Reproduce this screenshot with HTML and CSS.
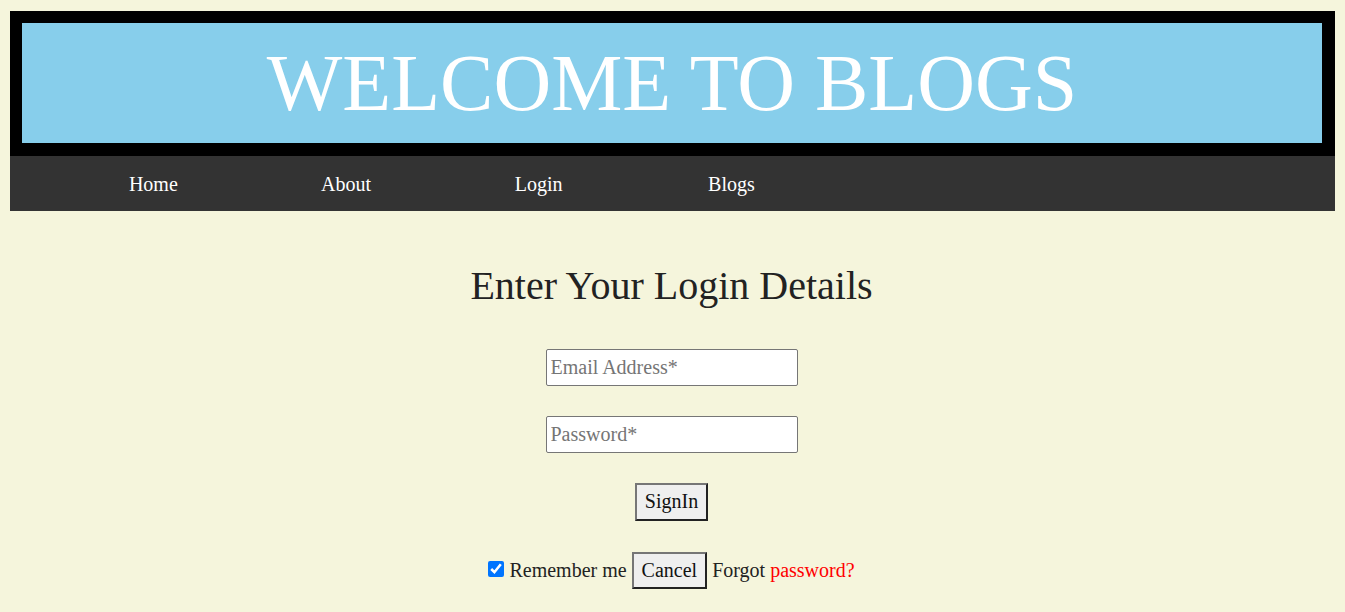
FILE: index.html
```html
<!DOCTYPE html>
<html lang="en">
<head>
<meta charset="utf-8">
<title>Blogs - Login</title>
<link rel="stylesheet" href="styles.css">
</head>
<body>
<header class="banner">
  <div class="banner-inner">
    <h1 class="banner-title">WELCOME TO BLOGS</h1>
  </div>
</header>
<nav class="nav">
  <a class="nav-link" href="#">Home</a>
  <a class="nav-link" href="#">About</a>
  <a class="nav-link" href="#">Login</a>
  <a class="nav-link" href="#">Blogs</a>
</nav>
<main class="login">
  <h2 class="login-title">Enter Your Login Details</h2>
  <form class="login-form">
    <div class="row"><input class="field" type="email" placeholder="Email Address*"></div>
    <div class="row"><input class="field" type="password" placeholder="Password*"></div>
    <div class="row"><button class="btn" type="button">SignIn</button></div>
    <div class="row row-last"><input class="check" type="checkbox" checked> Remember me <button class="btn" type="button">Cancel</button> Forgot <a class="forgot" href="#">password?</a></div>
  </form>
</main>
</body>
</html>
```

FILE: styles.css
```css
html, body {
  margin: 0;
  padding: 0;
  background: #f5f5dc;
}
body {
  font-family: "Liberation Serif", "Times New Roman", serif;
  font-size: 20px;
  color: #222;
  padding: 11px 10px 0 10px;
}
.banner {
  background: #000;
  padding: 12px 13px 13px 12px;
}
.banner-inner {
  background: #87ceeb;
  height: 120px;
}
.banner-title {
  margin: 0;
  font-weight: normal;
  font-size: 80px;
  line-height: 120px;
  color: #fff;
  text-align: center;
}
.nav {
  display: grid;
  grid-template-columns: repeat(4, 192.7px);
  padding-left: 47px;
  background: #333;
  height: 55px;
  line-height: 56px;
}
.nav-link {
  color: #fff;
  text-decoration: none;
  text-align: center;
}
.login {
  text-align: center;
  padding-right: 2px;
}
.login-title {
  margin: 52px 0 0 0;
  font-weight: normal;
  font-size: 40px;
  line-height: 46px;
  color: #222;
}
.login-form {
  margin-top: 40px;
}
.row {
  margin-bottom: 30px;
  line-height: 23px;
}
.row-last {
  padding-top: 1px;
}
.field {
  box-sizing: border-box;
  width: 252px;
  height: 37px;
  padding: 0 4px;
  border: 1px solid #767676;
  border-radius: 2px;
  background: #fff;
  font-family: "Liberation Serif", "Times New Roman", serif;
  font-size: 20px;
  color: #222;
  vertical-align: top;
}
.field::placeholder {
  color: #757575;
}
.btn {
  box-sizing: border-box;
  height: 37.5px;
  padding: 0 8px;
  background: #efefef;
  border: 2px solid;
  border-color: #767676 #222 #222 #767676;
  font-family: "Liberation Serif", "Times New Roman", serif;
  font-size: 20px;
  color: #111;
}
.check {
  width: 16px;
  height: 16px;
  margin: 0;
  vertical-align: baseline;
}
.forgot {
  color: #ff0000;
  text-decoration: none;
}
```
